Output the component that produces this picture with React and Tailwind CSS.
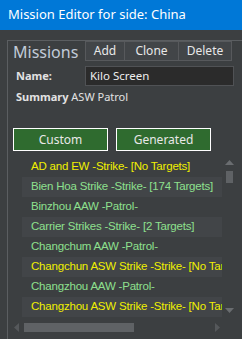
import React from 'react'

const missions = [
  { name: 'AD and EW  -Strike- [No Targets]', yellow: true },
  { name: 'Bien Hoa Strike -Strike- [174 Targets]' },
  { name: 'Binzhou AAW  -Patrol-' },
  { name: 'Carrier Strikes  -Strike- [2 Targets]' },
  { name: 'Changchum AAW  -Patrol-' },
  { name: 'Changchun ASW Strike -Strike- [No Targets]', yellow: true },
  { name: 'Changzhou AAW  -Patrol-' },
  { name: 'Changzhou ASW Strike -Strike- [No Targets]', yellow: true },
]

const ui = { fontFamily: '"Noto Sans", "Open Sans", sans-serif' }
const list = { fontFamily: '"Liberation Sans", Arial, sans-serif' }

export default function App() {
  return (
    <div className="w-[242px] h-[339px] overflow-hidden bg-[#3c3f41] flex flex-col" style={ui}>
      {/* Title bar */}
      <div className="h-[30px] shrink-0 bg-[#0078d7] flex items-center pl-[8px] text-white text-[13px]">
        Mission Editor for side: China
      </div>

      <div className="flex-1 pt-[10px] pl-[7px] flex flex-col min-h-0">
        <div className="flex-1 border-l border-t border-[#5b5e61] flex flex-col min-h-0">
          {/* Header row */}
          <div className="flex items-start">
            <div className="w-[77px] pl-[5px] pt-[1px] text-[16px] leading-[20px] text-[#c2cbd8]">Missions</div>
            <div className="flex border border-[#57595c] bg-[#424548] text-[#e8e8e8] text-[12px] h-[20px]">
              <div className="w-[39px] flex items-center justify-center border-r border-[#57595c]">Add</div>
              <div className="w-[54px] flex items-center justify-center border-r border-[#57595c]">Clone</div>
              <div className="w-[52px] flex items-center justify-center">Delete</div>
            </div>
          </div>

          {/* Name */}
          <div className="flex items-center mt-[4px] h-[20px]">
            <div className="w-[77px] pl-[8px] text-[11px] font-bold text-[#e2e2e2]">Name:</div>
            <div className="w-[149px] h-[20px] bg-[#2b2b2b] border border-[#505255] flex items-center pl-[4px] text-[11.5px] text-[#eeeeee]">
              Kilo Screen
            </div>
          </div>

          {/* Summary */}
          <div className="pl-[8px] mt-[3px] text-[11px] text-[#e2e2e2] leading-[16px]">
            <span className="font-bold">Summary</span> ASW Patrol
          </div>

          {/* Custom / Generated */}
          <div className="flex gap-[8px] pl-[5px] mt-[23px]">
            <div className="w-[95px] h-[23px] bg-[#2f6b2f] border border-white flex items-center justify-center text-[12px] text-[#e8e8e8]">
              Custom
            </div>
            <div className="w-[95px] h-[23px] bg-[#2f6b2f] border border-white flex items-center justify-center text-[12px] text-[#e8e8e8]">
              Generated
            </div>
          </div>

          {/* List */}
          <div className="flex mt-[6px] pl-[14px]">
            <div className="w-[200px] overflow-hidden" style={list}>
              {missions.map((m, i) => (
                <div
                  key={m.name}
                  className={`h-[20px] flex items-center pl-[9px] whitespace-nowrap text-[11.5px] tracking-[-0.2px] ${i % 2 === 1 ? 'bg-[#424548]' : ''} ${m.yellow ? 'text-[#f0f000]' : 'text-[#8ee08e]'}`}
                >
                  {m.name}
                </div>
              ))}
            </div>
            {/* Vertical scrollbar */}
            <div className="w-[15px] flex flex-col items-center pt-[3px]">
              <svg width="9" height="5" viewBox="0 0 9 5"><polygon points="0,5 4.5,0 9,5" fill="#6a6d70" /></svg>
              <div className="w-[7px] h-[12px] bg-[#5f6265] mt-[6px]" />
              <div className="flex-1" />
              <svg width="9" height="5" viewBox="0 0 9 5" className="mb-[4px]"><polygon points="0,0 9,0 4.5,5" fill="#6a6d70" /></svg>
            </div>
          </div>

          {/* Horizontal scrollbar */}
          <div className="flex items-center h-[10px] mt-[5px] pl-[6px]">
            <svg width="5" height="9" viewBox="0 0 5 9"><polygon points="5,0 0,4.5 5,9" fill="#55585b" /></svg>
            <div className="w-[110px] h-[9px] bg-[#5f6265] ml-[5px]" />
            <div className="w-[81px]" />
            <svg width="5" height="9" viewBox="0 0 5 9"><polygon points="0,0 5,4.5 0,9" fill="#55585b" /></svg>
          </div>
        </div>
      </div>
    </div>
  )
}
